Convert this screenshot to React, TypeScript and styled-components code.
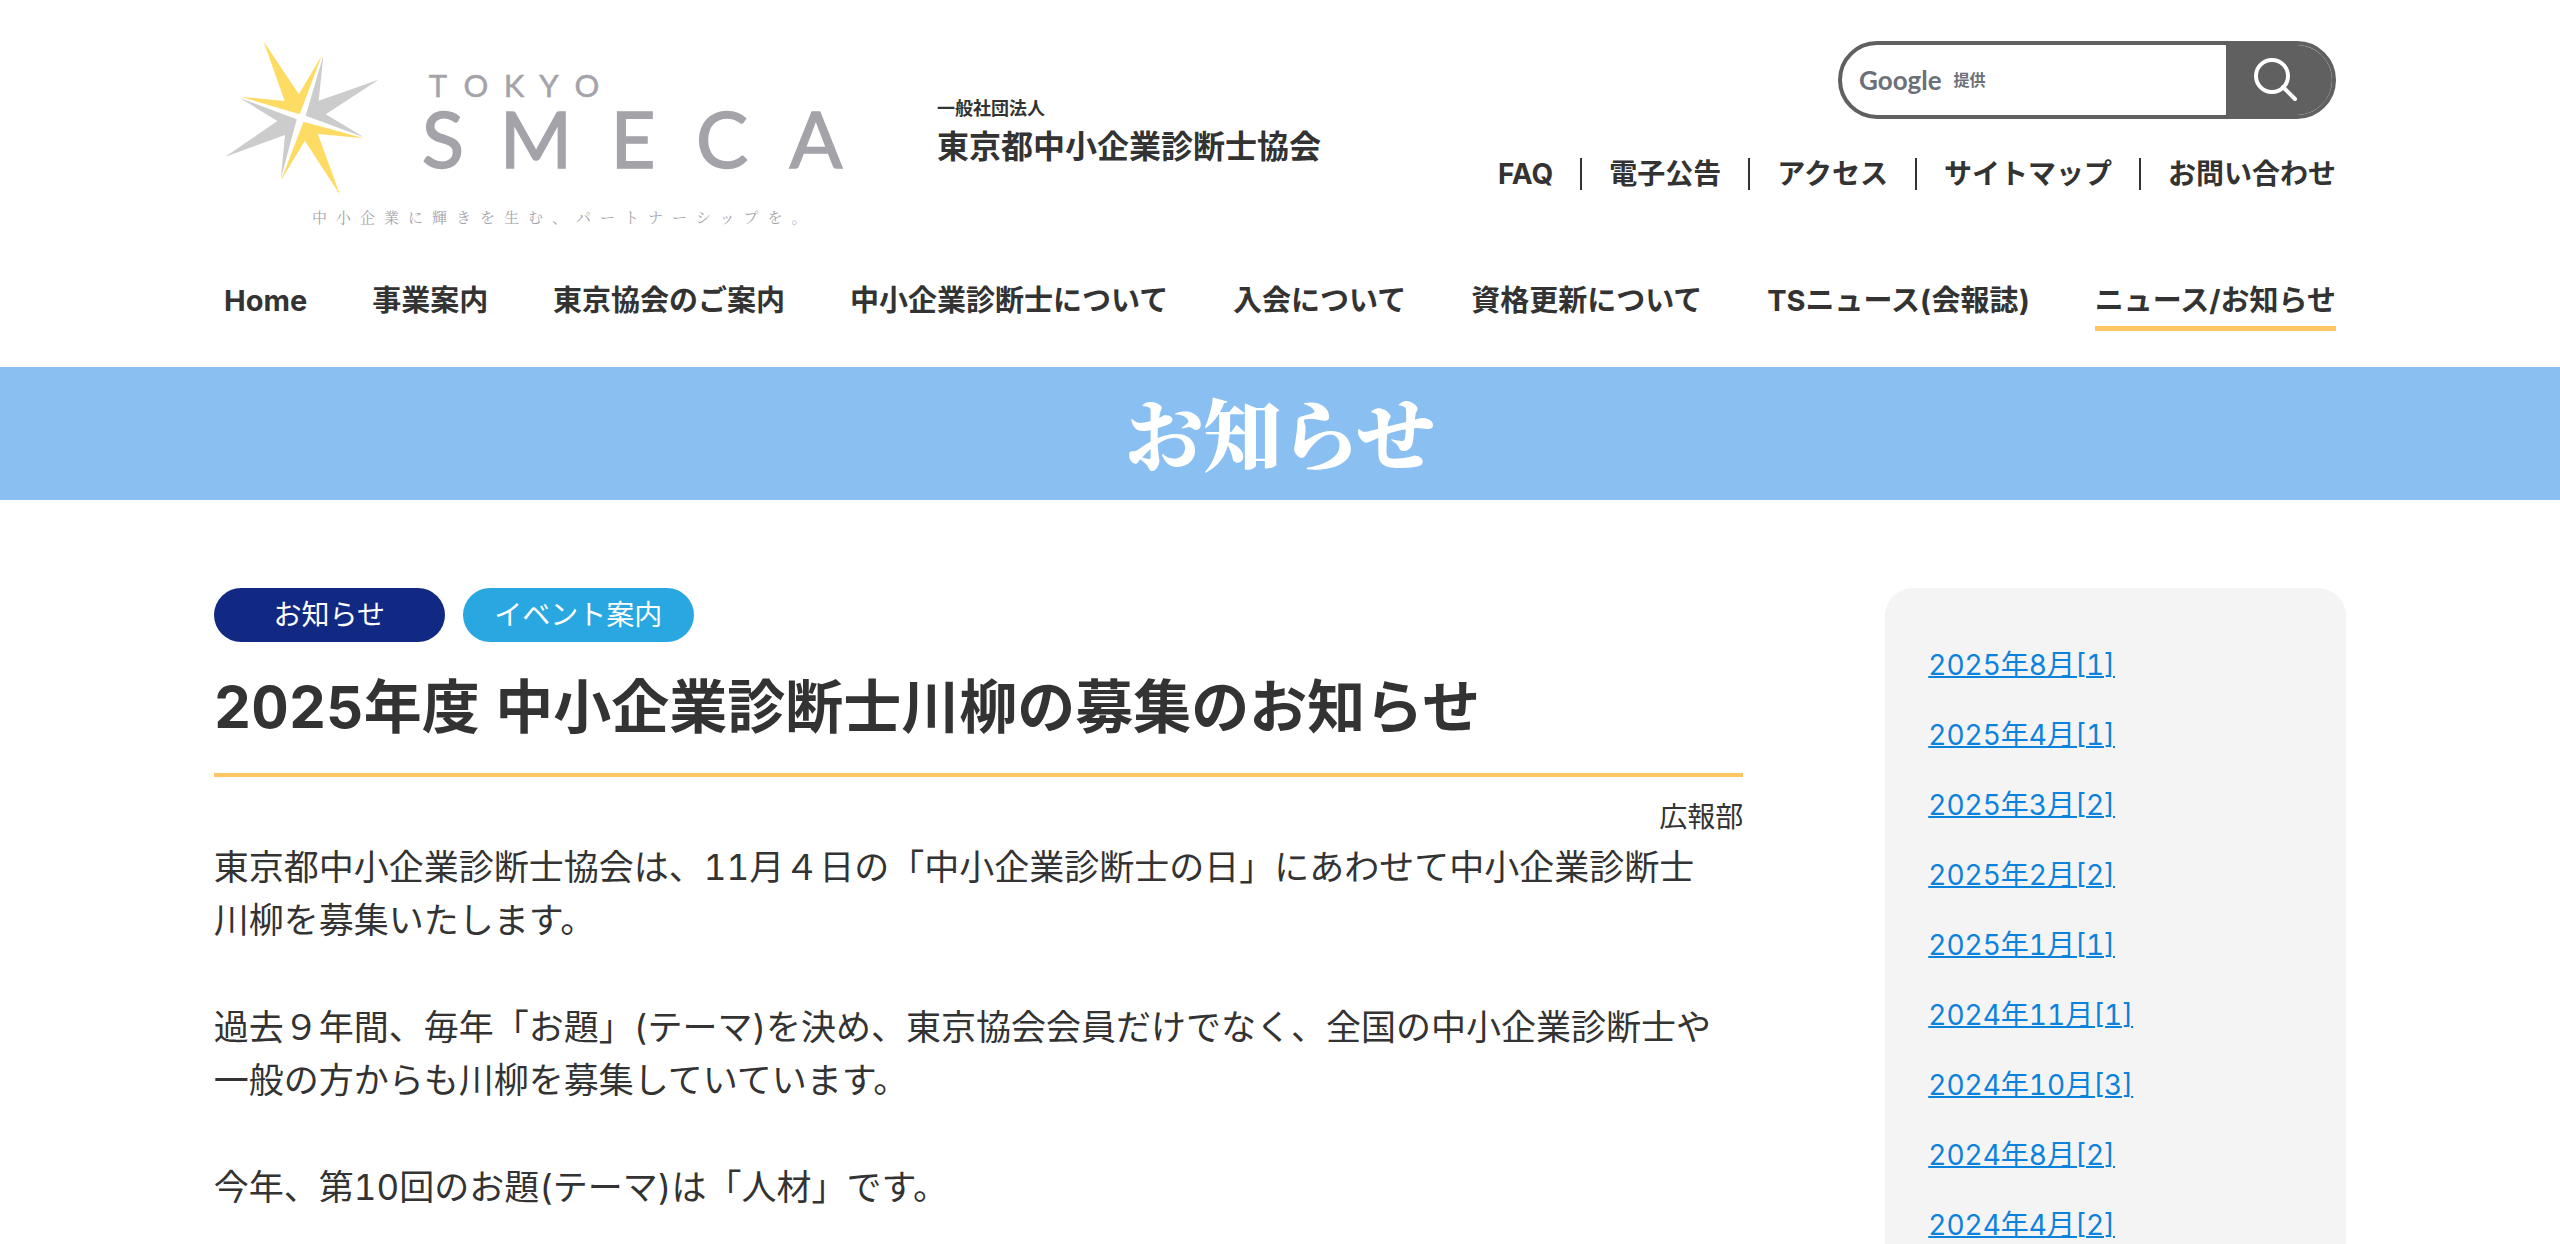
import React from "react";
import styled, { createGlobalStyle } from "styled-components";

const sans = `Inter, "Noto Sans CJK JP", sans-serif`;
const serif = `"Noto Serif CJK JP", "Noto Sans CJK JP", serif`;

const GlobalStyle = createGlobalStyle`
  *, *::before, *::after { box-sizing: border-box; }
  html { scrollbar-width: none; }
  body {
    margin: 0;
    background: #fff;
    color: #333;
    font-family: ${sans};
    font-size: 28px;
    font-variant-numeric: tabular-nums;
    line-height: 42px;
  }
  ul { list-style: none; margin: 0; padding: 0; }
  h1, h2, p { margin: 0; }
  a { color: inherit; text-decoration: none; }
`;

const Header = styled.header`
  width: 82.5%;
  margin: 0 auto;
  padding: 40px 0 36px;
`;

const HeaderTop = styled.div`
  display: flex;
  justify-content: space-between;
  align-items: flex-start;
  margin-bottom: 44px;
`;

const Brand = styled.a`
  display: flex;
  gap: 93px;
`;

const Logo = styled.svg`
  display: block;
  width: 620px;
  height: 196px;
  flex: none;
`;

const OrgName = styled.span`
  display: flex;
  flex-direction: column;
  padding-top: 55px;
  font-weight: 700;
  white-space: nowrap;
`;

const OrgType = styled.span`
  font-size: 18px;
  line-height: 28px;
`;

const OrgTitle = styled.span`
  font-size: 32px;
  line-height: 48px;
`;

const HeaderSide = styled.div`
  display: flex;
  flex-direction: column;
  align-items: flex-end;
  gap: 34px;
`;

const SearchForm = styled.form`
  display: flex;
  width: 498px;
  height: 78px;
  margin-top: 1px;
  border: 4px solid #606060;
  border-radius: 39px;
  overflow: hidden;
`;

const SearchLabel = styled.label`
  display: flex;
  align-items: center;
  gap: 12px;
  padding-left: 17px;
  color: #6b7079;
  font-size: 16px;
  font-weight: 700;
  white-space: nowrap;
`;

const GoogleWord = styled.span`
  font-family: Lato, sans-serif;
  font-size: 26px;
  font-weight: 700;
`;

const SearchInput = styled.input`
  flex: 1;
  min-width: 0;
  border: 0;
  padding: 0 12px;
  background: transparent;
  font: inherit;
  outline: none;
`;

const SearchButton = styled.button`
  display: flex;
  align-items: center;
  justify-content: center;
  width: 106px;
  border: 0;
  padding: 0 6px 0 0;
  background: #606060;
  cursor: pointer;
`;

const UtilityList = styled.ul`
  display: flex;
  align-items: center;
`;

const UtilityItem = styled.li`
  display: flex;
  align-items: center;
  font-weight: 700;
  line-height: 42px;
  white-space: nowrap;

  & + &::before {
    content: "";
    width: 2px;
    height: 32px;
    margin: 0 27px;
    background: #333;
  }
`;

const NavList = styled.ul`
  display: flex;
  justify-content: space-between;
`;

const NavLink = styled.a<{ $active?: boolean }>`
  display: block;
  padding-bottom: 4px;
  border-bottom: 5px solid ${(p) => (p.$active ? "#ffc663" : "transparent")};
  font-size: 29px;
  font-weight: 700;
  white-space: nowrap;
`;

const Banner = styled.div`
  display: flex;
  justify-content: center;
  padding: 14px 0 19px;
  background: #8abff2;
  color: #fff;
  font-family: ${serif};
  font-size: 78px;
  font-weight: 900;
  line-height: 100px;
`;

const Content = styled.div`
  display: flex;
  align-items: flex-start;
  gap: 142px;
  width: 83.3%;
  margin: 0 auto;
  padding: 88px 0;
`;

const Article = styled.article`
  flex: 1;
  min-width: 0;
`;

const Tags = styled.div`
  display: flex;
  gap: 18px;
`;

const Tag = styled.a<{ $color: string }>`
  width: 231px;
  border-radius: 27px;
  background: ${(p) => p.$color};
  color: #fff;
  text-align: center;
  line-height: 54px;
`;

const Title = styled.h1`
  margin-top: 23px;
  padding-bottom: 24px;
  border-bottom: 4px solid #ffc663;
  font-size: 58px;
  font-weight: 700;
  line-height: 84px;
`;

const Department = styled.p`
  margin: 19px 0 3px;
  text-align: right;
`;

const Body = styled.div`
  display: flex;
  flex-direction: column;
  gap: 54px;
  font-size: 35px;
  line-height: 53px;
`;

const Archive = styled.aside`
  flex: none;
  width: 461px;
  padding: 56px 43px;
  border-radius: 28px;
  background: #f4f4f4;
`;

const ArchiveList = styled.ul`
  display: flex;
  flex-direction: column;
  gap: 28px;
`;

const ArchiveLink = styled.a`
  color: #0b82dc;
  text-decoration: underline;
  text-decoration-thickness: 2px;
`;

const utilities = ["FAQ", "電子公告", "アクセス", "サイトマップ", "お問い合わせ"];

const navigation = [
  "Home",
  "事業案内",
  "東京協会のご案内",
  "中小企業診断士について",
  "入会について",
  "資格更新について",
  "TSニュース(会報誌)",
  "ニュース/お知らせ",
];

const archives = [
  "2025年8月[1]",
  "2025年4月[1]",
  "2025年3月[2]",
  "2025年2月[2]",
  "2025年1月[1]",
  "2024年11月[1]",
  "2024年10月[3]",
  "2024年8月[2]",
  "2024年4月[2]",
];

const SmecaLogo = () => (
  <Logo viewBox="0 0 620 196" role="img" aria-label="TOKYO SMECA">
    <g fill="#fedc64">
      <path d="M39.5 1.3 74.9 54.3 98 15 75.7 74.3 16.4 56.7 60.6 61Z" />
      <path d="M79.5 81.7 140 98.3 93.8 94 116 154.7 80.8 100.7 56.8 141Z" />
    </g>
    <g fill="#ccc">
      <path d="M99.3 16 94.7 60.7 154.5 39.7 101.8 74.3 140 97.3 81.6 75.7Z" />
      <path d="M16.4 58.3 72.8 79.3 56.8 138.7 61 95 0.8 117 53.4 81Z" />
    </g>
    <g fill="#a5a3aa" stroke="#a5a3aa" fontFamily="Lato, sans-serif" textAnchor="middle">
      <text x="214 252 290 325 363" y="57" fontSize="31" strokeWidth="0.5">TOKYO</text>
      <text x="219 312 409 498 592" y="128" fontSize="78" strokeWidth="1.5">SMECA</text>
    </g>
    <text x="88" y="183" fill="#a5a3aa" fontFamily={serif} fontSize="15" letterSpacing="9">
      中小企業に輝きを生む、パートナーシップを。
    </text>
  </Logo>
);

export default function App() {
  return (
    <>
      <GlobalStyle />
      <Header>
        <HeaderTop>
          <Brand href="#">
            <SmecaLogo />
            <OrgName>
              <OrgType>一般社団法人</OrgType>
              <OrgTitle>東京都中小企業診断士協会</OrgTitle>
            </OrgName>
          </Brand>
          <HeaderSide>
            <SearchForm role="search">
              <SearchLabel htmlFor="site-search">
                <GoogleWord>Google</GoogleWord>
                提供
              </SearchLabel>
              <SearchInput id="site-search" type="text" />
              <SearchButton type="button" aria-label="検索">
                <svg width="44" height="44" viewBox="0 0 44 44" fill="none" stroke="#fff" strokeWidth="4" strokeLinecap="round">
                  <circle cx="18" cy="18" r="16" />
                  <path d="M29 29 41 41" />
                </svg>
              </SearchButton>
            </SearchForm>
            <UtilityList>
              {utilities.map((label) => (
                <UtilityItem key={label}>
                  <a href="#">{label}</a>
                </UtilityItem>
              ))}
            </UtilityList>
          </HeaderSide>
        </HeaderTop>
        <nav>
          <NavList>
            {navigation.map((label) => (
              <li key={label}>
                <NavLink href="#" $active={label === "ニュース/お知らせ"}>
                  {label}
                </NavLink>
              </li>
            ))}
          </NavList>
        </nav>
      </Header>
      <Banner>お知らせ</Banner>
      <Content>
        <Article>
          <Tags>
            <Tag href="#" $color="#122984">お知らせ</Tag>
            <Tag href="#" $color="#29a7e1">イベント案内</Tag>
          </Tags>
          <Title>2025年度 中小企業診断士川柳の募集のお知らせ</Title>
          <Department>広報部</Department>
          <Body>
            <p>
              東京都中小企業診断士協会は、11月４日の「中小企業診断士の日」にあわせて中小企業診断士
              <br />
              川柳を募集いたします。
            </p>
            <p>
              過去９年間、毎年「お題」(テーマ)を決め、東京協会会員だけでなく、全国の中小企業診断士や
              <br />
              一般の方からも川柳を募集していています。
            </p>
            <p>今年、第10回のお題(テーマ)は「人材」です。</p>
          </Body>
        </Article>
        <Archive>
          <ArchiveList>
            {archives.map((label) => (
              <li key={label}>
                <ArchiveLink href="#">{label}</ArchiveLink>
              </li>
            ))}
          </ArchiveList>
        </Archive>
      </Content>
    </>
  );
}
